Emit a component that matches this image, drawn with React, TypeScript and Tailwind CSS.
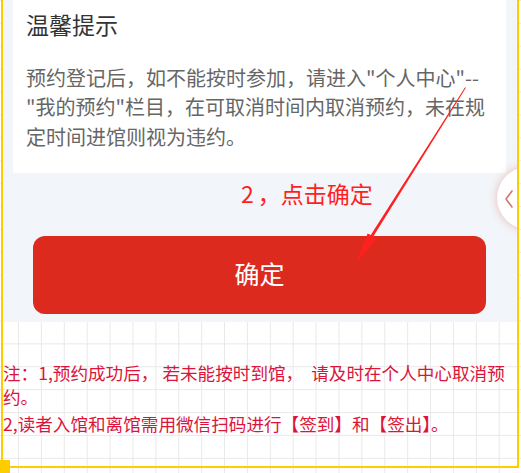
import React from "react";

const CJK = "font-['Noto_Sans_CJK_SC','Noto_Sans',sans-serif]";

export default function App() {
  return (
    <div
      className={`relative w-[521px] h-[473px] overflow-hidden bg-white ${CJK} bg-[linear-gradient(to_right,#e9e9e9_1px,transparent_1px),linear-gradient(to_bottom,#e9e9e9_1px,transparent_1px)] bg-[length:22.9px_22.9px] bg-[position:18px_0px]`}
    >
      <div className="ml-[1px] w-[518px] h-[468px] border-x-2 border-b-2 border-[#ffcc00] flex flex-col">
        {/* app area */}
        <div className="relative h-[322px] shrink-0 overflow-hidden bg-[#f2f5f9] flex flex-col">
          {/* card */}
          <div className="ml-[10px] w-[493px] bg-white pl-[13px] pt-[8px] pb-[22px]">
            <div className="h-[32px] leading-[32px] text-[23px] text-[#333333]">温馨提示</div>
            <div className="mt-[22.7px] text-[20px] leading-[29.4px] text-[#666666]">
              <div className="whitespace-nowrap">预约登记后，如不能按时参加，请进入"个人中心"--</div>
              <div className="whitespace-nowrap">"我的预约"栏目，在可取消时间内取消预约，未在规</div>
              <div className="whitespace-nowrap">定时间进馆则视为违约。</div>
            </div>
          </div>

          {/* annotation */}
          <div className="mt-[5px] h-[30px] leading-[30px] pl-[238px] text-[23px] text-[#ff1f1f] whitespace-nowrap">
            <span>2</span>
            <span className="ml-[4px]">，点击确定</span>
          </div>

          {/* button */}
          <div className="mt-[28px] ml-[30px] w-[453px] h-[78px] rounded-[12px] bg-[#dc2b1e] flex items-center justify-center text-white text-[25px] pb-[2px]">
            确定
          </div>

          {/* side floating circle */}
          <div className="absolute left-[494px] top-[167px] w-[62px] h-[62px] rounded-full bg-white shadow-[0_0_8px_rgba(225,110,100,0.45)]">
            <svg
              className="absolute left-[7px] top-[22px]"
              width="10"
              height="20"
              viewBox="0 0 10 20"
              fill="none"
            >
              <polyline
                points="8,2 2,10 8,18"
                stroke="#cf7a6c"
                strokeWidth="1.6"
                strokeLinecap="round"
                strokeLinejoin="round"
              />
            </svg>
          </div>
        </div>

        {/* note */}
        <div className="pt-[38.6px] text-[17.6px] leading-[24px] text-[#dc143c]">
          <div className="whitespace-nowrap">
            <span>注：1,预约成功后，</span>
            <span className="ml-[4px]">若未能按时到馆，</span>
            <span className="ml-[8px]">请及时在个人中心取消预</span>
          </div>
          <div className="whitespace-nowrap">约。</div>
          <div className="mt-[3px] whitespace-nowrap">2,读者入馆和离馆需用微信扫码进行【签到】和【签出】。</div>
        </div>
      </div>

      {/* yellow corner block */}
      <div className="absolute left-0 bottom-0 w-[10px] h-[13px] bg-[#ffcc00]" />

      {/* red annotation arrow */}
      <svg
        className="absolute left-0 top-0 pointer-events-none"
        width="521"
        height="473"
        viewBox="0 0 521 473"
      >
        <polygon
          points="465.9,87.8 373.4,236.3 376.4,238.8 356,263 367.6,233.4 370.8,235.1 465.1,87.2"
          fill="#ff2020"
        />
      </svg>
    </div>
  );
}
